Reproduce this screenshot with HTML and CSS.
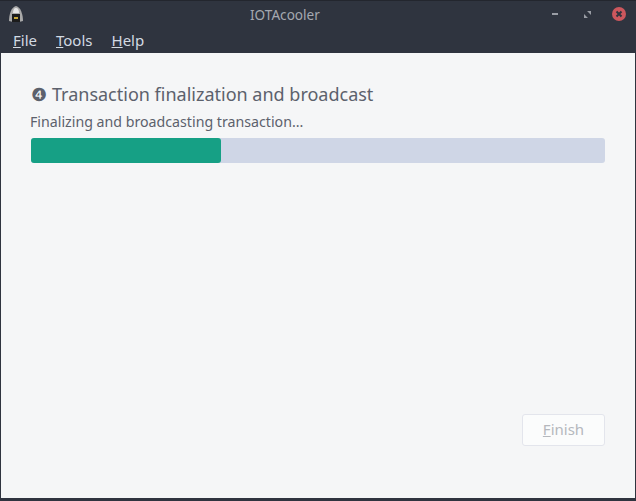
FILE: index.html
```html
<!DOCTYPE html>
<html lang="en">
<head>
    <meta charset="UTF-8">
    <title>IOTAcooler</title>
    <link rel="stylesheet" href="styles.css">
</head>
<body>

<div class="window">
    <div class="titlebar">
        <svg class="app-icon" width="16" height="18" viewBox="0 0 16 18">
            <path d="M1 16 C1 10 3 2 8 1 C13 2 15 10 15 16 L11 17 L5 17 Z" fill="#a9a9a9"/>
            <path d="M5 8 C5 5 6 3 8 3 C10 3 11 5 11 8 Z" fill="#e6e6e6"/>
            <rect x="4" y="9" width="8" height="8" fill="#1c1c1c"/>
            <rect x="6" y="12" width="4" height="2" fill="#c9a93a"/>
        </svg>
        <div class="title">IOTAcooler</div>
        <div class="controls">
            <span class="ctl-min"></span>
            <svg class="ctl-max" width="7" height="7" viewBox="0 0 8 8">
                <path d="M0 8 L0 3.5 L4.5 8 Z M8 0 L8 4.5 L3.5 0 Z" fill="#9a9da5"/>
            </svg>
            <svg class="ctl-close" width="14" height="14" viewBox="0 0 14 14">
                <circle cx="7" cy="7" r="7" fill="#cc575d"/>
                <path d="M4.5 4.5 L9.5 9.5 M9.5 4.5 L4.5 9.5" stroke="#2f343f" stroke-width="2"/>
            </svg>
        </div>
    </div>

    <div class="menubar">
        <span class="menu-item"><u>F</u>ile</span>
        <span class="menu-item"><u>T</u>ools</span>
        <span class="menu-item"><u>H</u>elp</span>
    </div>

    <div class="content">
        <h2 class="step-title"><span class="step-num">❹</span>Transaction finalization and broadcast</h2>
        <p class="status">Finalizing and broadcasting transaction...</p>
        <div class="progress">
            <div class="progress-bar" style="width: 33.1%"></div>
        </div>
        <div class="actions">
            <button class="finish" disabled><u>F</u>inish</button>
        </div>
    </div>
</div>

</body>
</html>
```

FILE: styles.css
```css
html, body {
    margin: 0;
    padding: 0;
    height: 100%;
}

body {
    font-family: "Noto Sans", sans-serif;
    background-color: #2f343f;
    overflow: hidden;
}

.window {
    box-sizing: border-box;
    width: 636px;
    height: 501px;
    display: flex;
    flex-direction: column;
    padding: 0 1px 3px 1px;
    background-color: #2f343f;
    border-top: 1px solid #23262e;
}

.titlebar {
    height: 27px;
    display: flex;
    align-items: center;
    padding: 0 9px 1px 7px;
    box-sizing: border-box;
    color: #a5a8b0;
    font-size: 13.6px;
}

.title {
    margin-left: 226px;
}

.controls {
    margin-left: auto;
    display: flex;
    align-items: center;
    gap: 26px;
}

.ctl-max {
    margin-right: -5px;
}

.ctl-min {
    width: 6px;
    height: 2px;
    background-color: #9a9da5;
}

.menubar {
    height: 25px;
    box-sizing: border-box;
    display: flex;
    align-items: center;
    gap: 19px;
    padding: 0 0 2px 12px;
    color: #d3dae3;
    font-size: 15px;
}

.content {
    flex: 1;
    display: flex;
    flex-direction: column;
    padding: 29px 30px 52px 30px;
    background-color: #f5f6f7;
    color: #5c616c;
}

.step-title {
    display: flex;
    align-items: center;
    gap: 5px;
    margin: 0;
    font-size: 18px;
    font-weight: normal;
    line-height: 25px;
}

.step-num {
    font-size: 18px;
}

.status {
    margin: 5px -1px 0 -1px;
    font-size: 14.2px;
    line-height: 20px;
}

.progress {
    height: 25px;
    margin-top: 6px;
    background-color: #cfd6e6;
    border-radius: 3px;
}

.progress-bar {
    height: 100%;
    background-color: #16a085;
    border-radius: 3px;
}

.actions {
    margin-top: auto;
    display: flex;
    justify-content: flex-end;
}

.finish {
    width: 83px;
    height: 32px;
    padding: 0 0 2px 0;
    font-family: inherit;
    font-size: 15px;
    color: #b5b8bd;
    background-color: #fbfcfc;
    border: 1px solid #e3e5ec;
    border-radius: 3px;
}
```
